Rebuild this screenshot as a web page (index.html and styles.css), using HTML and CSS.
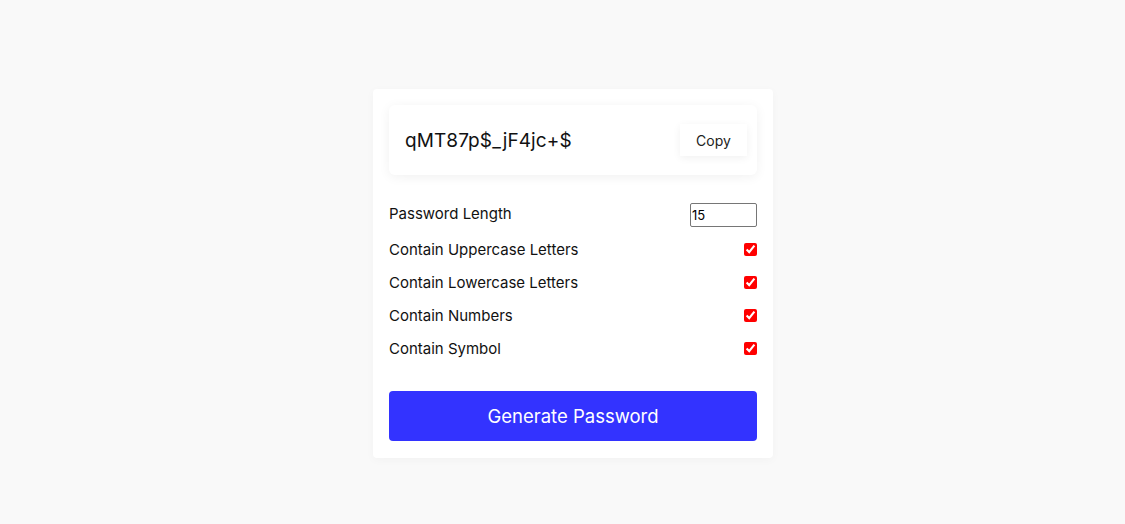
FILE: index.html
```html
<!DOCTYPE html>
<html lang="en">
<head>
    <meta charset="UTF-8">
    <meta name="viewport" content="width=device-width, initial-scale=1.0">
    <title>Password Generator</title>
    <link rel="stylesheet" href="styles.css">
</head>
<body>
    <div class="container">
        <div class="result">
            <span class="result-text" id="result">qMT87p$_jF4jc+$</span>
            <button class="copy-btn" id="copyBtn">Copy</button>
        </div>
        <div class="settings">
            <div class="setting">
                <label for="length" class="length-label">Password Length</label>
                <input type="number" id="length" class="length-input" min="4" max="20" value="15">
            </div>
            <div class="setting">
                <label for="uppercase">Contain Uppercase Letters</label>
                <input type="checkbox" id="uppercase" checked>
            </div>
            <div class="setting">
                <label for="lowercase">Contain Lowercase Letters</label>
                <input type="checkbox" id="lowercase" checked>
            </div>
            <div class="setting">
                <label for="numbers">Contain Numbers</label>
                <input type="checkbox" id="numbers" checked>
            </div>
            <div class="setting">
                <label for="symbols">Contain Symbol</label>
                <input type="checkbox" id="symbols" checked>
            </div>
        </div>
        <button class="generate-btn" id="generateBtn">Generate Password</button>
    </div>
</body>
</html>
```

FILE: styles.css
```css
body {
    font-family: Inter, "Noto Sans", sans-serif;
    background-color: #f9f9f9;
    margin: 0;
    height: 100vh;
    display: flex;
    justify-content: center;
    padding-top: 89px;
    padding-left: 21px;
    box-sizing: border-box;
    color: #111;
}

.container {
    width: 400px;
    height: 369px;
    box-sizing: border-box;
    background-color: #fff;
    border-radius: 4px;
    padding: 16px;
    box-shadow: 0 2px 10px rgba(0, 0, 0, 0.03);
}

.result {
    height: 70px;
    display: flex;
    align-items: center;
    justify-content: space-between;
    padding: 0 10px 0 16px;
    border-radius: 6px;
    box-shadow: 0 2px 12px rgba(0, 0, 0, 0.06);
}

.result-text {
    font-size: 19px;
    letter-spacing: 0.1px;
}

.copy-btn {
    font-family: inherit;
    font-size: 14px;
    color: #222;
    background-color: #fff;
    border: none;
    width: 67px;
    height: 32px;
    cursor: pointer;
    box-shadow: 0 2px 8px rgba(0, 0, 0, 0.06);
}

.settings {
    margin-top: 25px;
}

.setting {
    height: 33px;
    display: flex;
    align-items: center;
    justify-content: space-between;
    font-size: 15px;
}

.length-label {
    margin-bottom: 6px;
}

.length-input {
    width: 67px;
    height: 24px;
    box-sizing: border-box;
    font-family: inherit;
    font-size: 13px;
    padding: 0 1px;
    border: 1px solid #767676;
    border-radius: 2px;
    margin-bottom: 3px;
}

input[type="checkbox"] {
    accent-color: red;
    width: 13px;
    height: 13px;
    margin: 0;
}

.generate-btn {
    width: 100%;
    height: 50px;
    margin-top: 26px;
    background-color: #3333ff;
    color: #fff;
    font-family: inherit;
    font-size: 18.5px;
    border: none;
    border-radius: 4px;
    cursor: pointer;
}
```
